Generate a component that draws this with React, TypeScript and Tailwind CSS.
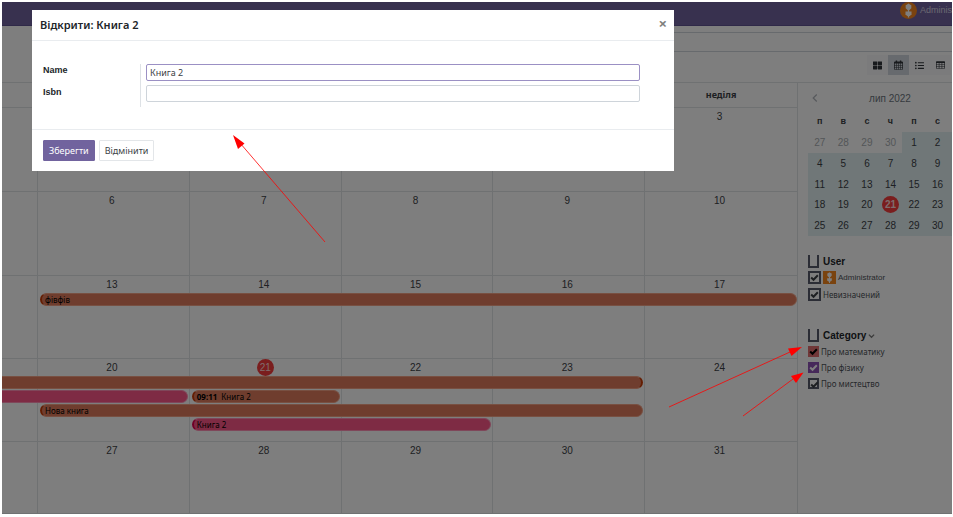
import React from 'react';
import { FaThLarge, FaListUl } from 'react-icons/fa';

type CalendarEvent = { title?: string; time?: string; place: string; tone: string };
type Week = { days: string[]; height: string; events: CalendarEvent[] };

const ORANGE = 'bg-[#de7b5c] border-[#f0a084]';
const PINK = 'bg-[#fd5689] border-[#ff8fb4]';

const weeks: Week[] = [
  { days: ['', '', '', '', '', '3'], height: 'h-[84px]', events: [] },
  { days: ['', '6', '7', '8', '9', '10'], height: 'h-[84px]', events: [] },
  {
    days: ['', '13', '14', '15', '16', '17'],
    height: 'h-[83px]',
    events: [
      { title: 'фівфів', place: 'col-start-2 col-end-7 row-start-1 ml-[2px] rounded-full border-l-2 border-l-[#c93a04]', tone: ORANGE },
    ],
  },
  {
    days: ['', '20', '21', '22', '23', '24'],
    height: 'h-[83px]',
    events: [
      { place: 'col-start-1 col-end-6 row-start-1 mr-[2px] rounded-r-full border-l-0 border-r-2 border-r-[#c93a04]', tone: ORANGE },
      { place: 'col-start-1 col-end-3 row-start-2 mr-[2px] rounded-r-full border-l-0', tone: PINK },
      { title: 'Книга 2', time: '09:11', place: 'col-start-3 col-end-4 row-start-2 ml-[2px] mr-[2px] rounded-full border-l-2 border-l-[#c93a04]', tone: ORANGE },
      { title: 'Нова книга', place: 'col-start-2 col-end-6 row-start-3 ml-[2px] mr-[2px] rounded-full border-l-2 border-l-[#c93a04]', tone: ORANGE },
      { title: 'Книга 2', place: 'col-start-3 col-end-5 row-start-4 ml-[2px] mr-[2px] rounded-full border-l-2 border-l-[#e0004f]', tone: PINK },
    ],
  },
  { days: ['', '27', '28', '29', '30', '31'], height: 'h-[71px]', events: [] },
];

const miniWeeks = [
  ['27', '28', '29', '30', '1', '2', ''],
  ['4', '5', '6', '7', '8', '9', ''],
  ['11', '12', '13', '14', '15', '16', ''],
  ['18', '19', '20', '21', '22', '23', ''],
  ['25', '26', '27', '28', '29', '30', ''],
];

const COLUMNS = 'grid grid-cols-[36px_repeat(5,minmax(0,1fr))]';

function Robot({ className }: { className: string }) {
  return (
    <svg viewBox="0 0 18 18" className={className} aria-hidden="true">
      <rect width="18" height="18" fill="#f5871f" />
      <path d="M6 3.500l1.500-.8L9 1.600l1.500 1.100 1.500.8v3l-2 2H8l-2-2z" fill="#fff" />
      <path d="M5.800 10h6.400v3l-1.700 1.700h-3L5.800 13z" fill="#fff" />
      <path d="M8.300 8h1.400v3H8.300zM8.300 14h1.400v2.500H8.300z" fill="#fff" />
    </svg>
  );
}

function CalendarIcon() {
  return (
    <svg viewBox="0 0 13 14" className="h-[10px] w-[9px]" fill="currentColor" fillRule="evenodd" aria-hidden="true">
      <path d="M1 2h1.500V.5h2V2h4V.5h2V2H12l1 1v10l-1 1H1l-1-1V3zM1 5v2.200h2.200V5zM4 5v2.200h2.200V5zM7 5v2.200h2.200V5zM10 5v2.200h2V5zM1 8v2.200h2.200V8zM4 8v2.200h2.200V8zM7 8v2.200h2.200V8zM10 8v2.200h2V8zM1 11v2h2.200v-2zM4 11v2h2.200v-2zM7 11v2h2.200v-2zM10 11v2h2v-2z" />
    </svg>
  );
}

function TableIcon() {
  return (
    <svg viewBox="0 0 14 12" className="h-[8px] w-[9px]" fill="currentColor" fillRule="evenodd" aria-hidden="true">
      <path d="M1 0h12l1 1v10l-1 1H1l-1-1V1zM1 3v2.200h3.300V3zM5.300 3v2.200h3.400V3zM9.700 3v2.200H13V3zM1 6v2.200h3.300V6zM5.300 6v2.200h3.400V6zM9.700 6v2.200H13V6zM1 9v2h3.300V9zM5.300 9v2h3.400V9zM9.700 9v2H13V9z" />
    </svg>
  );
}

function Check({ box, size, label, children, text = 'text-[8px]' }: {
  box: string; size: string; label: string; children?: React.ReactNode; text?: string;
}) {
  return (
    <label className="flex items-center gap-[2px]">
      <span className={`grid shrink-0 place-items-center ${size} ${box}`}>
        <input type="checkbox" defaultChecked className="col-start-1 row-start-1 size-full appearance-none" />
        <svg viewBox="0 0 10 10" className="pointer-events-none col-start-1 row-start-1 size-[9px]" fill="none" stroke="currentColor" strokeWidth="2.200" aria-hidden="true">
          <path d="M1.300 5l2.600 2.500L8.700 2.500" />
        </svg>
      </span>
      {children}
      <span className={`whitespace-nowrap leading-[13px] text-[#4c5157] ${text}`}>{label}</span>
    </label>
  );
}

function GroupTitle({ title, chevron }: { title: string; chevron?: boolean }) {
  return (
    <label className="flex h-[13px] items-center gap-[4px]">
      <input type="checkbox" className="h-[13px] w-[11px] shrink-0 appearance-none border-2 border-t-0 border-[#565b6a]" />
      <span className="font-['Liberation_Sans',sans-serif] text-[10px] font-bold leading-[11px] text-[#212529]">{title}</span>
      {chevron && (
        <svg viewBox="0 0 8 8" className="-ml-[2px] size-[7px] text-[#777]" fill="none" stroke="currentColor" strokeWidth="1.500" aria-hidden="true">
          <path d="M1 3l3 3 3-3" />
        </svg>
      )}
    </label>
  );
}

function MonthView() {
  return (
    <section className="min-w-0 flex-1">
      <div className={`${COLUMNS} h-[25px] border-b border-[#dfe3e5]`}>
        {['', '', '', '', '', 'неділя'].map((d, i) => (
          <div key={i} className="flex items-center justify-center border-r border-[#dfe3e5] text-[9px] font-bold text-[#3c4146] last:border-r-0">
            {d}
          </div>
        ))}
      </div>
      {weeks.map((w, wi) => (
        <div key={wi} className={`grid ${w.height} border-b border-[#dfe3e5] last:border-b-0`}>
          <div className={`${COLUMNS} col-start-1 row-start-1`}>
            {w.days.map((d, i) => (
              <div key={i} className="flex items-start justify-center border-r border-[#dfe3e5] pr-[3px] font-['Liberation_Sans',sans-serif] text-[10px] leading-[18px] text-[#3c4146] last:border-r-0">
                {d === '21' ? (
                  <span className="ml-[3px] size-[17px] rounded-full bg-[#f43c3c] text-center leading-[17px] text-[#ffd9d9]">{d}</span>
                ) : d}
              </div>
            ))}
          </div>
          <div className={`${COLUMNS} z-10 col-start-1 row-start-1 auto-rows-[13px] content-start gap-y-[1px] pt-[17px]`}>
            {w.events.map((e, i) => (
              <div key={i} className={`flex items-center gap-[4px] border ${e.tone} ${e.place} overflow-hidden pl-[3px] text-[8px] leading-[11px] text-black`}>
                {e.time && <b className="font-bold">{e.time}</b>}
                {e.title}
              </div>
            ))}
          </div>
        </div>
      ))}
    </section>
  );
}

function Sidebar() {
  return (
    <aside className="w-[155px] shrink-0 overflow-hidden border-l border-[#dfe3e5] pl-[10px] pt-[7px]">
      <div className="flex h-[16px] items-center font-['Liberation_Sans',sans-serif] text-[10px] text-[#6c757d]">
        <button aria-label="Попередній місяць" className="w-[14px] pl-[4px]">
          <svg viewBox="0 0 6 9" className="h-[8px] w-[6px]" fill="none" stroke="#b0b4ba" strokeWidth="1.400"><path d="M5 .5l-4 4 4 4" /></svg>
        </button>
        <span className="flex-1 pl-[6px] text-center">лип 2022</span>
      </div>
      <table className="w-[165px] table-fixed border-collapse text-center font-['Liberation_Sans',sans-serif] text-[10px] leading-[13px] text-[#3c4146]">
        <thead>
          <tr className="h-[26px] text-[9px]">
            {['п', 'в', 'с', 'ч', 'п', 'с', ''].map((d, i) => <th key={i} className="p-0 pt-[4px]">{d}</th>)}
          </tr>
        </thead>
        <tbody>
          {miniWeeks.map((row, r) => (
            <tr key={r} className={r === 2 ? 'h-[20px]' : 'h-[21px]'}>
              {row.map((d, c) => (
                <td key={c} className={r === 0 && c < 4 ? 'p-0 text-[#a8adb1]' : 'bg-[#e0eff1] p-0'}>
                  {r === 3 && c === 3 ? (
                    <span className="mx-auto block size-[17px] rounded-full bg-[#f43c3c] font-bold leading-[17px] text-[#ffd9d9]">{d}</span>
                  ) : d}
                </td>
              ))}
            </tr>
          ))}
        </tbody>
      </table>
      <div className="mt-[19px] flex flex-col">
        <GroupTitle title="User" />
        <div className="mt-[3px] flex flex-col gap-[4px]">
          <Check label="Administrator" size="size-[13px]" box="border-2 border-[#565b6a] text-[#3c4045]" text="font-['Liberation_Sans',sans-serif] text-[8px]">
            <Robot className="size-[13px]" />
          </Check>
          <Check label="Невизначений" size="size-[13px]" box="border-2 border-[#565b6a] text-[#3c4045]" />
        </div>
      </div>
      <div className="mt-[28px] flex flex-col">
        <GroupTitle title="Category" chevron />
        <div className="mt-[3px] flex flex-col gap-[3px]">
          <Check label="Про математику" size="size-[11px]" box="bg-[#e06f70] text-black" />
          <Check label="Про фізику" size="size-[11px]" box="bg-[#8c52b5] text-white" />
          <Check label="Про мистецтво" size="size-[11px]" box="border-2 border-[#565b6a] text-[#3c4045]" />
        </div>
      </div>
    </aside>
  );
}

function Dialog() {
  const field = "h-[17px] w-full rounded-[2px] border px-[3px] text-[9px] text-[#3c4146] outline-none";
  return (
    <div role="dialog" aria-label="Відкрити: Книга 2" className="ml-[30px] mr-[278px] mt-[8px] bg-white text-[9px] text-[#3c4146]">
      <header className="flex h-[31px] items-center justify-between border-b border-[#e9ecef] pl-[8px] pr-[7px]">
        <h1 className="text-[11px] font-semibold text-[#212529]">Відкрити: Книга 2</h1>
        <button aria-label="Закрити" className="pb-[3px] text-[15px] font-bold leading-[15px] text-[#7f7f7f]">×</button>
      </header>
      <form className="grid grid-cols-[97px_minmax(0,1fr)] pb-[22px] pl-[11px] pr-[34px] pt-[23px] font-['Liberation_Sans',sans-serif]">
        <div className="flex flex-col gap-[5px] text-[9px] font-bold leading-[17px] text-[#212529]">
          <label htmlFor="name" className="-mt-[2px]">Name</label>
          <label htmlFor="isbn">Isbn</label>
        </div>
        <div className="flex h-[43px] flex-col gap-[4px] border-l border-[#dee2e6] pl-[5px]">
          <input id="name" defaultValue="Книга 2" className={`${field} border-[#9b90c4] font-['Noto_Sans',sans-serif]`} />
          <input id="isbn" className={`${field} border-[#ced4da] font-['Noto_Sans',sans-serif]`} />
        </div>
      </form>
      <footer className="flex gap-[4px] border-t border-[#e9ecef] py-[10px] pl-[11px]">
        <button className="h-[21px] rounded-[1px] border border-[#71639e] bg-[#71639e] px-[5px] text-[9px] text-white">Зберегти</button>
        <button className="h-[21px] rounded-[1px] border border-[#e3e6e9] bg-white px-[5px] text-[9px] text-[#3c4146]">Відмінити</button>
      </footer>
    </div>
  );
}

function Arrows() {
  return (
    <svg width="953" height="517" viewBox="0 0 953 517" className="pointer-events-none absolute left-0 top-0 z-30" aria-hidden="true">
      <g stroke="#ff0000" strokeWidth="1" strokeOpacity="0.800">
        <path d="M325 242L240 143" />
        <path d="M669 407L790 352" />
        <path d="M743 416L793 379" />
      </g>
      <g fill="#ff0000">
        <path d="M233 135l11.500 8.500-6.500 5.500z" />
        <path d="M802 347l-10.500 9-3.500-7.500z" />
        <path d="M803.500 372.500l-7.500 10.500-5-7z" />
      </g>
    </svg>
  );
}

export default function App() {
  return (
    <div className="relative bg-white pb-[3px] pl-[2px] pr-[1px] pt-[2px] font-['Noto_Sans',sans-serif]">
      <div className="relative overflow-hidden bg-[#fdfdfd]">
        <nav className="flex h-[24px] items-start justify-end overflow-hidden border-b border-[#5f5290] bg-[#71639e]">
          <div className="flex items-center gap-[3px] text-[9px] text-[#d5d1e2]">
            <Robot className="size-[17px] shrink-0 rounded-full" />
            <span className="font-['Liberation_Sans',sans-serif]">Adminis</span>
          </div>
        </nav>
        <div className="pt-[6px]">
          <input aria-label="Пошук" className="ml-[50%] block h-[20px] w-1/2 border-y border-[#ced4da] outline-none" />
          <div className="flex h-[30px] items-start justify-end pr-[1px] pt-[3px] text-[#30343a]">
            {[<FaThLarge className="size-[9px]" />, <CalendarIcon />, <FaListUl className="size-[9px]" />, <TableIcon />].map((icon, i) => (
              <button key={i} aria-label={['Канбан', 'Календар', 'Список', 'Таблиця'][i]} className={`flex h-[20px] w-[21px] items-center justify-center ${i === 1 ? 'bg-[#ced5dd]' : 'bg-[#f6f7f8]'}`}>
                {icon}
              </button>
            ))}
          </div>
        </div>
        <main className="flex border-y border-[#dfe3e5]">
          <MonthView />
          <Sidebar />
        </main>
        <div className="absolute inset-0 z-20 bg-black/50">
          <Dialog />
        </div>
      </div>
      <Arrows />
    </div>
  );
}
